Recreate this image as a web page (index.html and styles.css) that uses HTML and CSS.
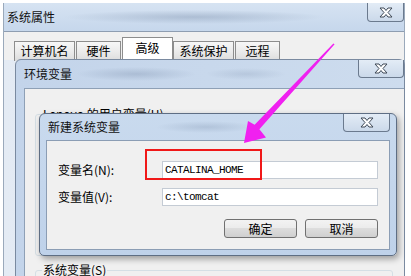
FILE: index.html
```html
<!DOCTYPE html>
<html lang="zh-CN">
<head>
  <meta charset="UTF-8" />
  <title>新建系统变量</title>
  <link rel="stylesheet" href="styles.css">
</head>
<body>
  <div class="desk">
    <div class="win sys">
      <div class="titlebar">
        <span class="title">系统属性</span>
        <span class="close close-sys">
          <svg viewBox="0 0 14 11" width="14" height="11"><path d="M1 1H5L7 3.5L9 1H13L9 5.5L13 10H9L7 7.5L5 10H1L5 5.5Z"/></svg>
        </span>
      </div>
      <div class="tabs">
        <span class="tab w4">计算机名</span>
        <span class="tab w2">硬件</span>
        <span class="tab active">高级</span>
        <span class="tab w4">系统保护</span>
        <span class="tab w2">远程</span>
      </div>
    </div>

    <div class="win env">
      <div class="titlebar">
        <span class="title">环境变量</span>
        <span class="close close-env">
          <svg viewBox="0 0 14 11" width="14" height="11"><path d="M1 1H5L7 3.5L9 1H13L9 5.5L13 10H9L7 7.5L5 10H1L5 5.5Z"/></svg>
        </span>
      </div>
      <div class="env-frame">
        <div class="env-body">
          <fieldset class="group user-vars">
            <legend>Lenovo 的用户变量(U)</legend>
          </fieldset>
          <fieldset class="group sys-vars">
            <legend>系统变量(S)</legend>
          </fieldset>
        </div>
      </div>
    </div>

    <div class="win dlg">
      <div class="titlebar">
        <span class="title">新建系统变量</span>
        <span class="close close-dlg">
          <svg viewBox="0 0 14 11" width="14" height="11"><path d="M1 1H5L7 3.5L9 1H13L9 5.5L13 10H9L7 7.5L5 10H1L5 5.5Z"/></svg>
        </span>
      </div>
      <div class="dlg-body">
        <div class="field">
          <label class="label">变量名(N):</label>
          <span class="input">CATALINA_HOME</span>
        </div>
        <div class="field">
          <label class="label">变量值(V):</label>
          <span class="input">c:\tomcat</span>
        </div>
        <div class="actions">
          <span class="btn">确定</span>
          <span class="btn">取消</span>
        </div>
      </div>
    </div>

    <div class="highlight"></div>

    <svg class="arrow" viewBox="0 0 411 276" width="411" height="276">
      <path d="M334.6 44.2L259.4 129.2L266 137.5L244 143L248 121L254.6 124.8L333.4 43.6Z"/>
    </svg>
  </div>
</body>
</html>
```

FILE: styles.css
```css
* {
  box-sizing: border-box;
}

body {
  margin: 0;
  background: #fff;
  color: #000;
  font-family: "Noto Sans CJK SC", "Noto Sans", sans-serif;
  font-size: 12px;
}

.desk {
  position: relative;
  width: 411px;
  height: 276px;
  overflow: hidden;
}

/* window chrome */
.titlebar {
  display: flex;
  justify-content: space-between;
  align-items: flex-start;
}

.title {
  align-self: center;
  line-height: 16px;
  color: #111;
}

.close {
  display: flex;
  align-items: center;
  justify-content: center;
  height: 18px;
  border: 1px solid #6b7a8e;
  border-top: none;
  border-radius: 0 0 4px 4px;
  background: linear-gradient(#e3ecf6, #cbd9ea);
}

.close svg path {
  fill: #fff;
  stroke: #3e4957;
  stroke-width: 1;
  stroke-linejoin: round;
}

/* 系统属性 */
.sys {
  margin: 3px 0 0 3px;
  width: 402px;
  height: 273px;
  border-left: 1px solid #9aa9bb;
  border-right: 1px solid #9aa9bb;
  background: linear-gradient(90deg, #e4ebf4, #d6e1ee);
}

.sys .titlebar {
  height: 29px;
  border-bottom: 1px solid #8e9db1;
  background:
    radial-gradient(ellipse 130px 7px at 190px 14px, rgba(110, 130, 160, 0.35), transparent),
    linear-gradient(#d6e3f2, #c6d7ec);
}

.sys .title {
  padding-left: 3px;
}

.close-sys {
  width: 37px;
  height: 19px;
}

.tabs {
  display: flex;
  align-items: flex-start;
  height: 28px;
  padding-left: 10px;
  background: #f0f0f0;
}

.tab {
  margin-top: 9px;
  margin-right: 1px;
  height: 20px;
  border: 1px solid #8d8d8d;
  border-bottom: none;
  background: linear-gradient(#f7f7f7, #ebebeb 50%, #dcdcdc);
  line-height: 18px;
  text-align: center;
}

.tab.w4 {
  width: 61px;
}

.tab.w2 {
  width: 45px;
}

.tab.active {
  width: 51px;
  height: 24px;
  margin-top: 5px;
  margin-right: 0;
  background: #fff;
  line-height: 20px;
}

/* 环境变量 */
.env {
  position: absolute;
  left: 15px;
  top: 59px;
  width: 390px;
  height: 230px;
  border: 1px solid #7a8aa0;
  border-radius: 6px 6px 0 0;
  background: linear-gradient(90deg, #c3d4ea, #cddcee);
}

.env .titlebar {
  height: 28px;
  background:
    radial-gradient(ellipse 60px 7px at 120px 14px, rgba(110, 130, 160, 0.3), transparent),
    radial-gradient(ellipse 40px 6px at 230px 14px, rgba(110, 130, 160, 0.2), transparent);
}

.env .title {
  padding-left: 8px;
}

.close-env {
  width: 46px;
}

.env-frame {
  padding-left: 8px;
}

.env-body {
  height: 200px;
  border-left: 1px solid #8ea0b6;
  border-top: 1px solid #8ea0b6;
  background: #f0f0f0;
  overflow: hidden;
}

.group {
  margin: 0 11px 0 10px;
  padding: 0 6px;
  border: 1px solid #d5dfe5;
  border-radius: 3px;
}

.group legend {
  padding: 0 1px;
  line-height: 16px;
}

.user-vars {
  margin-top: 17px;
  height: 150px;
}

.sys-vars {
  margin-top: 6px;
  height: 40px;
}

/* 新建系统变量 */
.dlg {
  position: absolute;
  left: 39px;
  top: 113px;
  width: 358px;
  height: 143px;
  padding: 0 6px 6px;
  border: 1px solid #5e6e84;
  border-radius: 6px 6px 5px 5px;
  background: linear-gradient(#c9daee, #bfd2ea);
  box-shadow: 2px 3px 6px rgba(0, 0, 0, 0.35);
}

.dlg .titlebar {
  height: 26px;
  background:
    radial-gradient(ellipse 50px 6px at 160px 13px, rgba(110, 130, 160, 0.25), transparent);
}

.dlg .title {
  padding-left: 2px;
}

.close-dlg {
  width: 47px;
}

.dlg-body {
  height: 110px;
  padding: 20px 11px 0;
  border: 1px solid #8b9db4;
  background: #f0f0f0;
}

.field {
  display: flex;
  align-items: center;
  height: 18px;
}

.field + .field {
  margin-top: 9px;
}

.label {
  width: 104px;
  line-height: 16px;
}

.input {
  width: 216px;
  height: 18px;
  padding-left: 2px;
  border: 1px solid #c4cbd4;
  background: #fff;
  font-family: "Liberation Mono", monospace;
  font-size: 11px;
  letter-spacing: -0.6px;
  line-height: 16px;
}

.actions {
  display: flex;
  justify-content: flex-end;
  gap: 8px;
  margin-top: 13px;
}

.btn {
  width: 73px;
  height: 19px;
  border: 1px solid #707070;
  border-radius: 3px;
  background: linear-gradient(#f3f3f3, #ebebeb 50%, #dddddd 50%, #cfcfcf);
  line-height: 17px;
  text-align: center;
}

/* annotations */
.highlight {
  position: absolute;
  left: 145px;
  top: 149px;
  width: 117px;
  height: 31px;
  border: 2px solid #f01818;
}

.arrow {
  position: absolute;
  left: 0;
  top: 0;
  pointer-events: none;
}

.arrow path {
  fill: #f020f0;
}
```
